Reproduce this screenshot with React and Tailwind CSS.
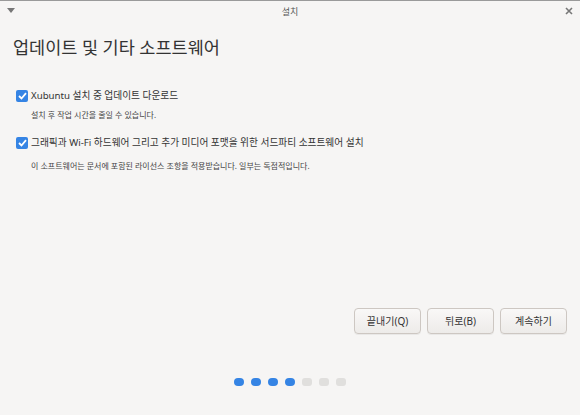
export default function App() {
  const dots = [true, true, true, true, false, false, false];

  return (
    <div
      className="w-[580px] h-[415px] bg-[#f6f5f4] text-[#2e3436] flex flex-col border-t border-[#9a9a9a] overflow-hidden"
      style={{ fontFamily: '"Noto Sans", "Noto Sans CJK KR", sans-serif' }}
    >
      {/* title bar */}
      <div className="h-[20px] flex items-center px-[6px] text-[#555]">
        <svg width="8" height="6" viewBox="0 0 8 6" className="ml-[1px]">
          <polygon points="0,0 8,0 4,5" fill="#777" />
        </svg>
        <div className="flex-1 text-center text-[9px] leading-none">설치</div>
        <svg width="8" height="8" viewBox="0 0 8 8" className="mr-[1px]">
          <path d="M1 1 L7 7 M7 1 L1 7" stroke="#777" strokeWidth="1.6" />
        </svg>
      </div>

      <h1 className="px-[13px] pt-[14px] text-[17.5px] leading-[24px] font-normal text-[#333]">
        업데이트 및 기타 소프트웨어
      </h1>

      <div className="px-[16px] pt-[30px] flex flex-col">
        <Option
          label="Xubuntu 설치 중 업데이트 다운로드"
          sub="설치 후 작업 시간을 줄일 수 있습니다."
          subPad="pt-[8px]"
        />
        <div className="h-[17px]" />
        <Option
          label="그래픽과 Wi-Fi 하드웨어 그리고 추가 미디어 포맷을 위한 서드파티 소프트웨어 설치"
          sub="이 소프트웨어는 문서에 포함된 라이선스 조항을 적용받습니다. 일부는 독점적입니다."
          subPad="pt-[12px]"
        />
      </div>

      <div className="flex-1" />

      <div className="flex justify-end gap-[6px] pr-[13px]">
        <Btn>끝내기(Q)</Btn>
        <Btn>뒤로(B)</Btn>
        <Btn>계속하기</Btn>
      </div>

      <div className="flex justify-center gap-[7px] pt-[44px] pb-[29px]">
        {dots.map((on, i) => (
          <div
            key={i}
            className={
              on
                ? 'w-[10px] h-[8px] rounded-[4px] bg-[#3584e4]'
                : 'w-[10px] h-[8px] rounded-[3px] bg-[#e0dfdd]'
            }
          />
        ))}
      </div>
    </div>
  );
}

function Option({ label, sub, subPad }) {
  return (
    <div className="flex flex-col">
      <div className="flex items-center gap-[3px] h-[14px]">
        <div className="w-[12px] h-[12px] rounded-[2px] bg-[#3584e4] flex items-center justify-center">
          <svg width="9" height="8" viewBox="0 0 9 8">
            <path d="M1 4 L3.5 6.5 L8 1.2" stroke="white" strokeWidth="1.8" fill="none" />
          </svg>
        </div>
        <span className="text-[9.7px] leading-none text-[#333]">{label}</span>
      </div>
      <div className={'pl-[15px] text-[8px] leading-none text-[#444] ' + subPad}>{sub}</div>
    </div>
  );
}

function Btn({ children }) {
  return (
    <button className="w-[67px] h-[26px] rounded-[4px] border border-[#cdc7c2] bg-gradient-to-b from-[#f9f8f7] to-[#edebe9] text-[10px] text-[#333] shadow-[0_1px_0_rgba(0,0,0,0.05)]">
      {children}
    </button>
  );
}
